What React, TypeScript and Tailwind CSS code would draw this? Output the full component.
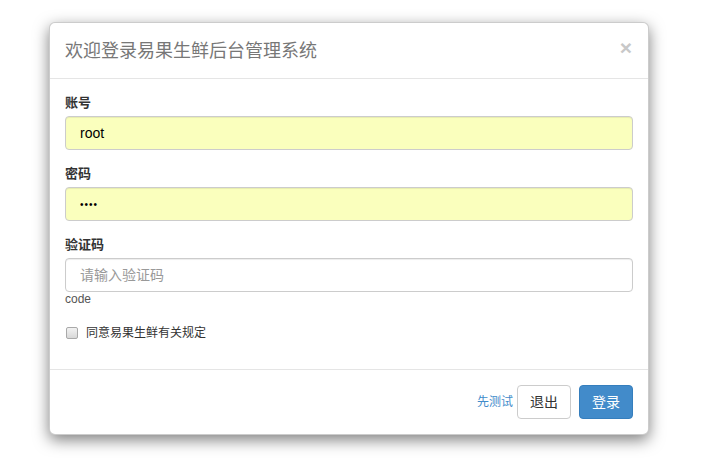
import { useState } from 'react';

const sans = "font-['Liberation_Sans','Noto_Sans_CJK_SC',sans-serif]";

export default function App() {
  const [account, setAccount] = useState('root');
  const [password, setPassword] = useState('1234');
  const [code, setCode] = useState('');
  const [agreed, setAgreed] = useState(false);

  return (
    <div className={`min-h-[467px] w-[726px] bg-white pt-[22px] pl-[49px] text-[#333] ${sans}`}>
      <div className="w-[600px] rounded-[6px] border border-[rgba(0,0,0,0.2)] bg-white shadow-[0_5px_15px_rgba(0,0,0,0.5)]">
        {/* header */}
        <div className="flex h-[56px] items-center justify-between border-b border-[#e5e5e5] px-[15px]">
          <h4 className="font-['Liberation_Serif','Noto_Sans_CJK_SC',serif] text-[18px] leading-[26px] text-[#777]">
            欢迎登录易果生鲜后台管理系统
          </h4>
          <button className="mr-[1px] -mt-[6px] text-[21px] font-bold leading-none text-[#c8c8c8]">×</button>
        </div>

        {/* body */}
        <div className="px-[15px] pt-[15px] pb-[28px]">
          <div className="mb-[15px]">
            <label className="mb-[5px] block h-[17px] text-[13px] font-bold leading-[17px]">账号</label>
            <input
              value={account}
              onChange={(e) => setAccount(e.target.value)}
              className="block h-[34px] w-full rounded-[4px] border border-[#ccc] bg-[#faffbd] px-[14px] text-[14px] text-black shadow-[inset_0_1px_1px_rgba(0,0,0,0.075)] outline-none"
            />
          </div>
          <div className="mb-[15px]">
            <label className="mb-[5px] block h-[17px] text-[13px] font-bold leading-[17px]">密码</label>
            <input
              type="password"
              value={password}
              onChange={(e) => setPassword(e.target.value)}
              className="block h-[34px] w-full rounded-[4px] border border-[#ccc] bg-[#faffbd] px-[14px] text-[10px] tracking-[1px] text-black shadow-[inset_0_1px_1px_rgba(0,0,0,0.075)] outline-none"
            />
          </div>
          <div>
            <label className="mb-[5px] block h-[17px] text-[13px] font-bold leading-[17px]">验证码</label>
            <input
              value={code}
              onChange={(e) => setCode(e.target.value)}
              placeholder="请输入验证码"
              className="block h-[34px] w-full rounded-[4px] border border-[#ccc] bg-white px-[14px] text-[14px] text-black shadow-[inset_0_1px_1px_rgba(0,0,0,0.075)] outline-none placeholder:text-[#999]"
            />
            <div className="h-[15px] text-[12px] leading-[15px] text-[#555]">code</div>
          </div>
          <label className="mt-[18px] flex h-[16px] cursor-pointer items-center text-[12px] leading-[16px]">
            <input
              type="checkbox"
              checked={agreed}
              onChange={(e) => setAgreed(e.target.checked)}
              className="peer sr-only"
            />
            <span className="ml-[1px] mr-[8px] h-[12px] w-[12px] rounded-[2px] border border-[#a9a9a9] bg-gradient-to-b from-[#f2f2f2] to-[#d8d8d8]" />
            <span>同意易果生鲜有关规定</span>
          </label>
        </div>

        {/* footer */}
        <div className="flex items-center justify-end border-t border-[#e5e5e5] px-[15px] pt-[15px] pb-[15px]">
          <a href="#" className="mr-[4px] text-[12px] text-[#428bca]">先测试</a>
          <button className="h-[34px] w-[54px] rounded-[4px] border border-[#ccc] bg-white text-[14px] text-[#333]">
            退出
          </button>
          <button className="ml-[8px] h-[34px] w-[54px] rounded-[4px] border border-[#357ebd] bg-[#428bca] text-[14px] text-white">
            登录
          </button>
        </div>
      </div>
    </div>
  );
}
